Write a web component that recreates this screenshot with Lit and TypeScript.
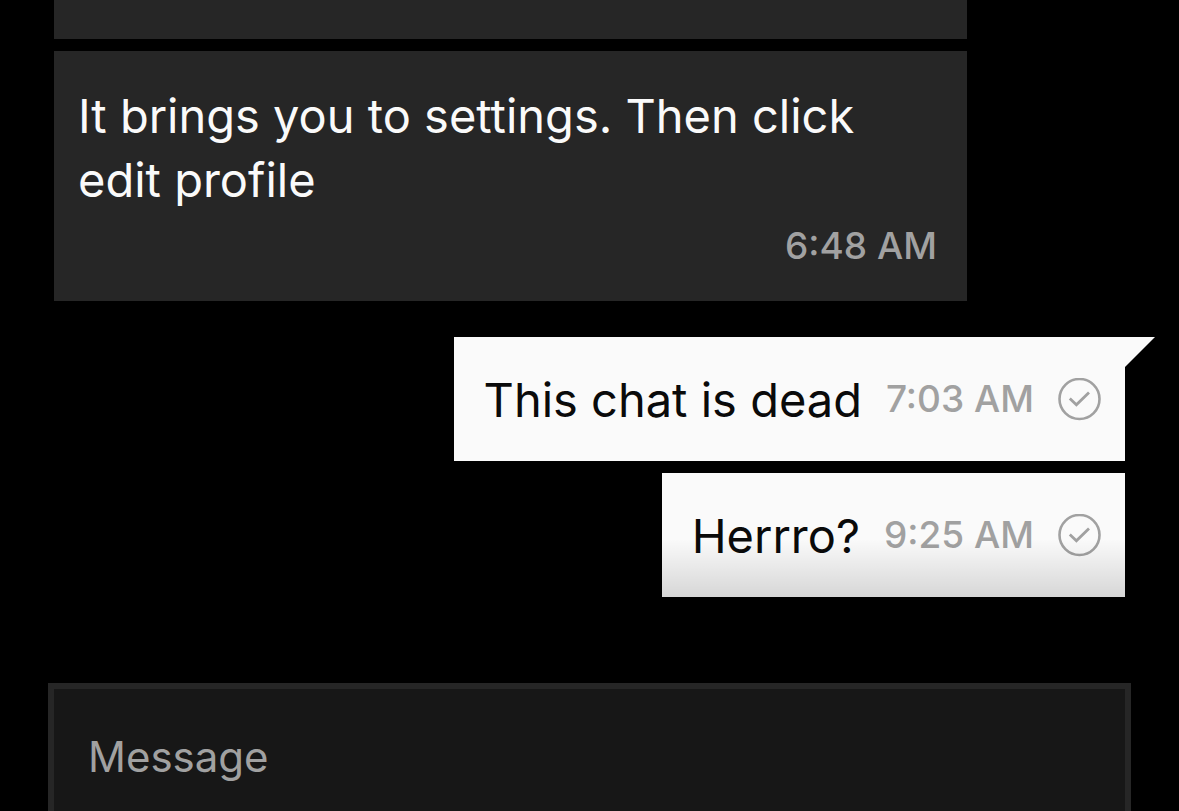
import { LitElement, html, css, nothing } from "lit";
import { customElement, property } from "lit/decorators.js";

@customElement("chat-bubble")
class ChatBubble extends LitElement {
  @property() text = "";
  @property() time = "";
  @property({ type: Boolean, reflect: true }) own = false;
  @property({ type: Boolean, reflect: true }) tail = false;

  static styles = css`
    :host {
      display: block;
    }
    .bubble {
      box-sizing: border-box;
      background: #262626;
      color: #fafafa;
      padding: 31px 30px 21px 24px;
      display: flex;
      flex-direction: column;
    }
    .text {
      margin: 0;
      padding-top: 2px;
      font-size: 47px;
      line-height: 64px;
    }
    .time {
      font-size: 37px;
      line-height: 68px;
      font-weight: 500;
      color: #a1a1a1;
      align-self: flex-end;
      white-space: nowrap;
    }
    :host([own]) .bubble {
      position: relative;
      flex-direction: row;
      align-items: center;
      background: #fafafa;
      color: #0a0a0a;
      padding: 28px 24px 28px 30px;
    }
    :host([own]) .time {
      align-self: center;
      margin: 0 24px;
    }
    .check {
      width: 43px;
      height: 43px;
      flex: none;
    }
    .tail {
      position: absolute;
      left: 100%;
      top: 0;
      width: 30px;
      height: 30px;
    }
  `;

  render() {
    return html`
      <div class="bubble">
        <p class="text">${this.text}</p>
        <time class="time">${this.time}</time>
        ${this.own
          ? html`<svg class="check" viewBox="0 0 43 43" fill="none" stroke="#a1a1a1" role="img" aria-label="Sent">
              <circle cx="21.5" cy="21" r="20" stroke-width="2.6" />
              <path d="M11.8 20.6l6.6 6.2L31 14.4" stroke-width="2.8" />
            </svg>`
          : nothing}
        ${this.tail
          ? html`<svg class="tail" viewBox="0 0 30 30" aria-hidden="true">
              <path d="M0 0H30L0 30Z" fill="#fafafa" />
            </svg>`
          : nothing}
      </div>
    `;
  }
}

@customElement("app-root")
class AppRoot extends LitElement {
  static styles = css`
    :host {
      display: flex;
      flex-direction: column;
      height: 100vh;
      overflow: hidden;
      background: #000;
      font-family: Inter, "Noto Sans", sans-serif;
    }
    .list {
      position: relative;
      flex: none;
      display: flex;
      flex-direction: column;
      gap: 12px;
      padding: 0 54px 86px;
    }
    .previous {
      height: 39px;
      background: #262626;
    }
    .received {
      display: flex;
      flex-direction: column;
      gap: 12px;
      margin-right: 158px;
      margin-bottom: 24px;
    }
    .sent {
      align-self: flex-end;
    }
    .fade {
      position: absolute;
      left: 0;
      right: 0;
      bottom: 0;
      height: 144px;
      pointer-events: none;
      background: linear-gradient(transparent, rgba(0, 0, 0, 0.14) 40%, #000);
    }
    .composer {
      flex: 1;
      display: flex;
      margin: 0 48px;
    }
    .input {
      flex: 1;
      box-sizing: border-box;
      min-width: 0;
      margin: 0;
      padding: 40px 34px 0;
      border: 6px solid #262626;
      border-bottom: 0;
      border-radius: 0;
      outline: none;
      resize: none;
      overflow: hidden;
      background: #171717;
      color: #fafafa;
      font-family: inherit;
      font-size: 42px;
      line-height: 56px;
    }
    .input::placeholder {
      color: #a1a1a1;
      opacity: 1;
    }
  `;

  render() {
    return html`
      <div class="list">
        <div class="received">
          <div class="previous"></div>
          <chat-bubble text="It brings you to settings. Then click edit profile" time="6:48 AM"></chat-bubble>
        </div>
        <chat-bubble class="sent" own tail text="This chat is dead" time="7:03 AM"></chat-bubble>
        <chat-bubble class="sent" own text="Herrro?" time="9:25 AM"></chat-bubble>
        <div class="fade"></div>
      </div>
      <form class="composer">
        <textarea class="input" aria-label="Message" placeholder="Message"></textarea>
      </form>
    `;
  }
}
